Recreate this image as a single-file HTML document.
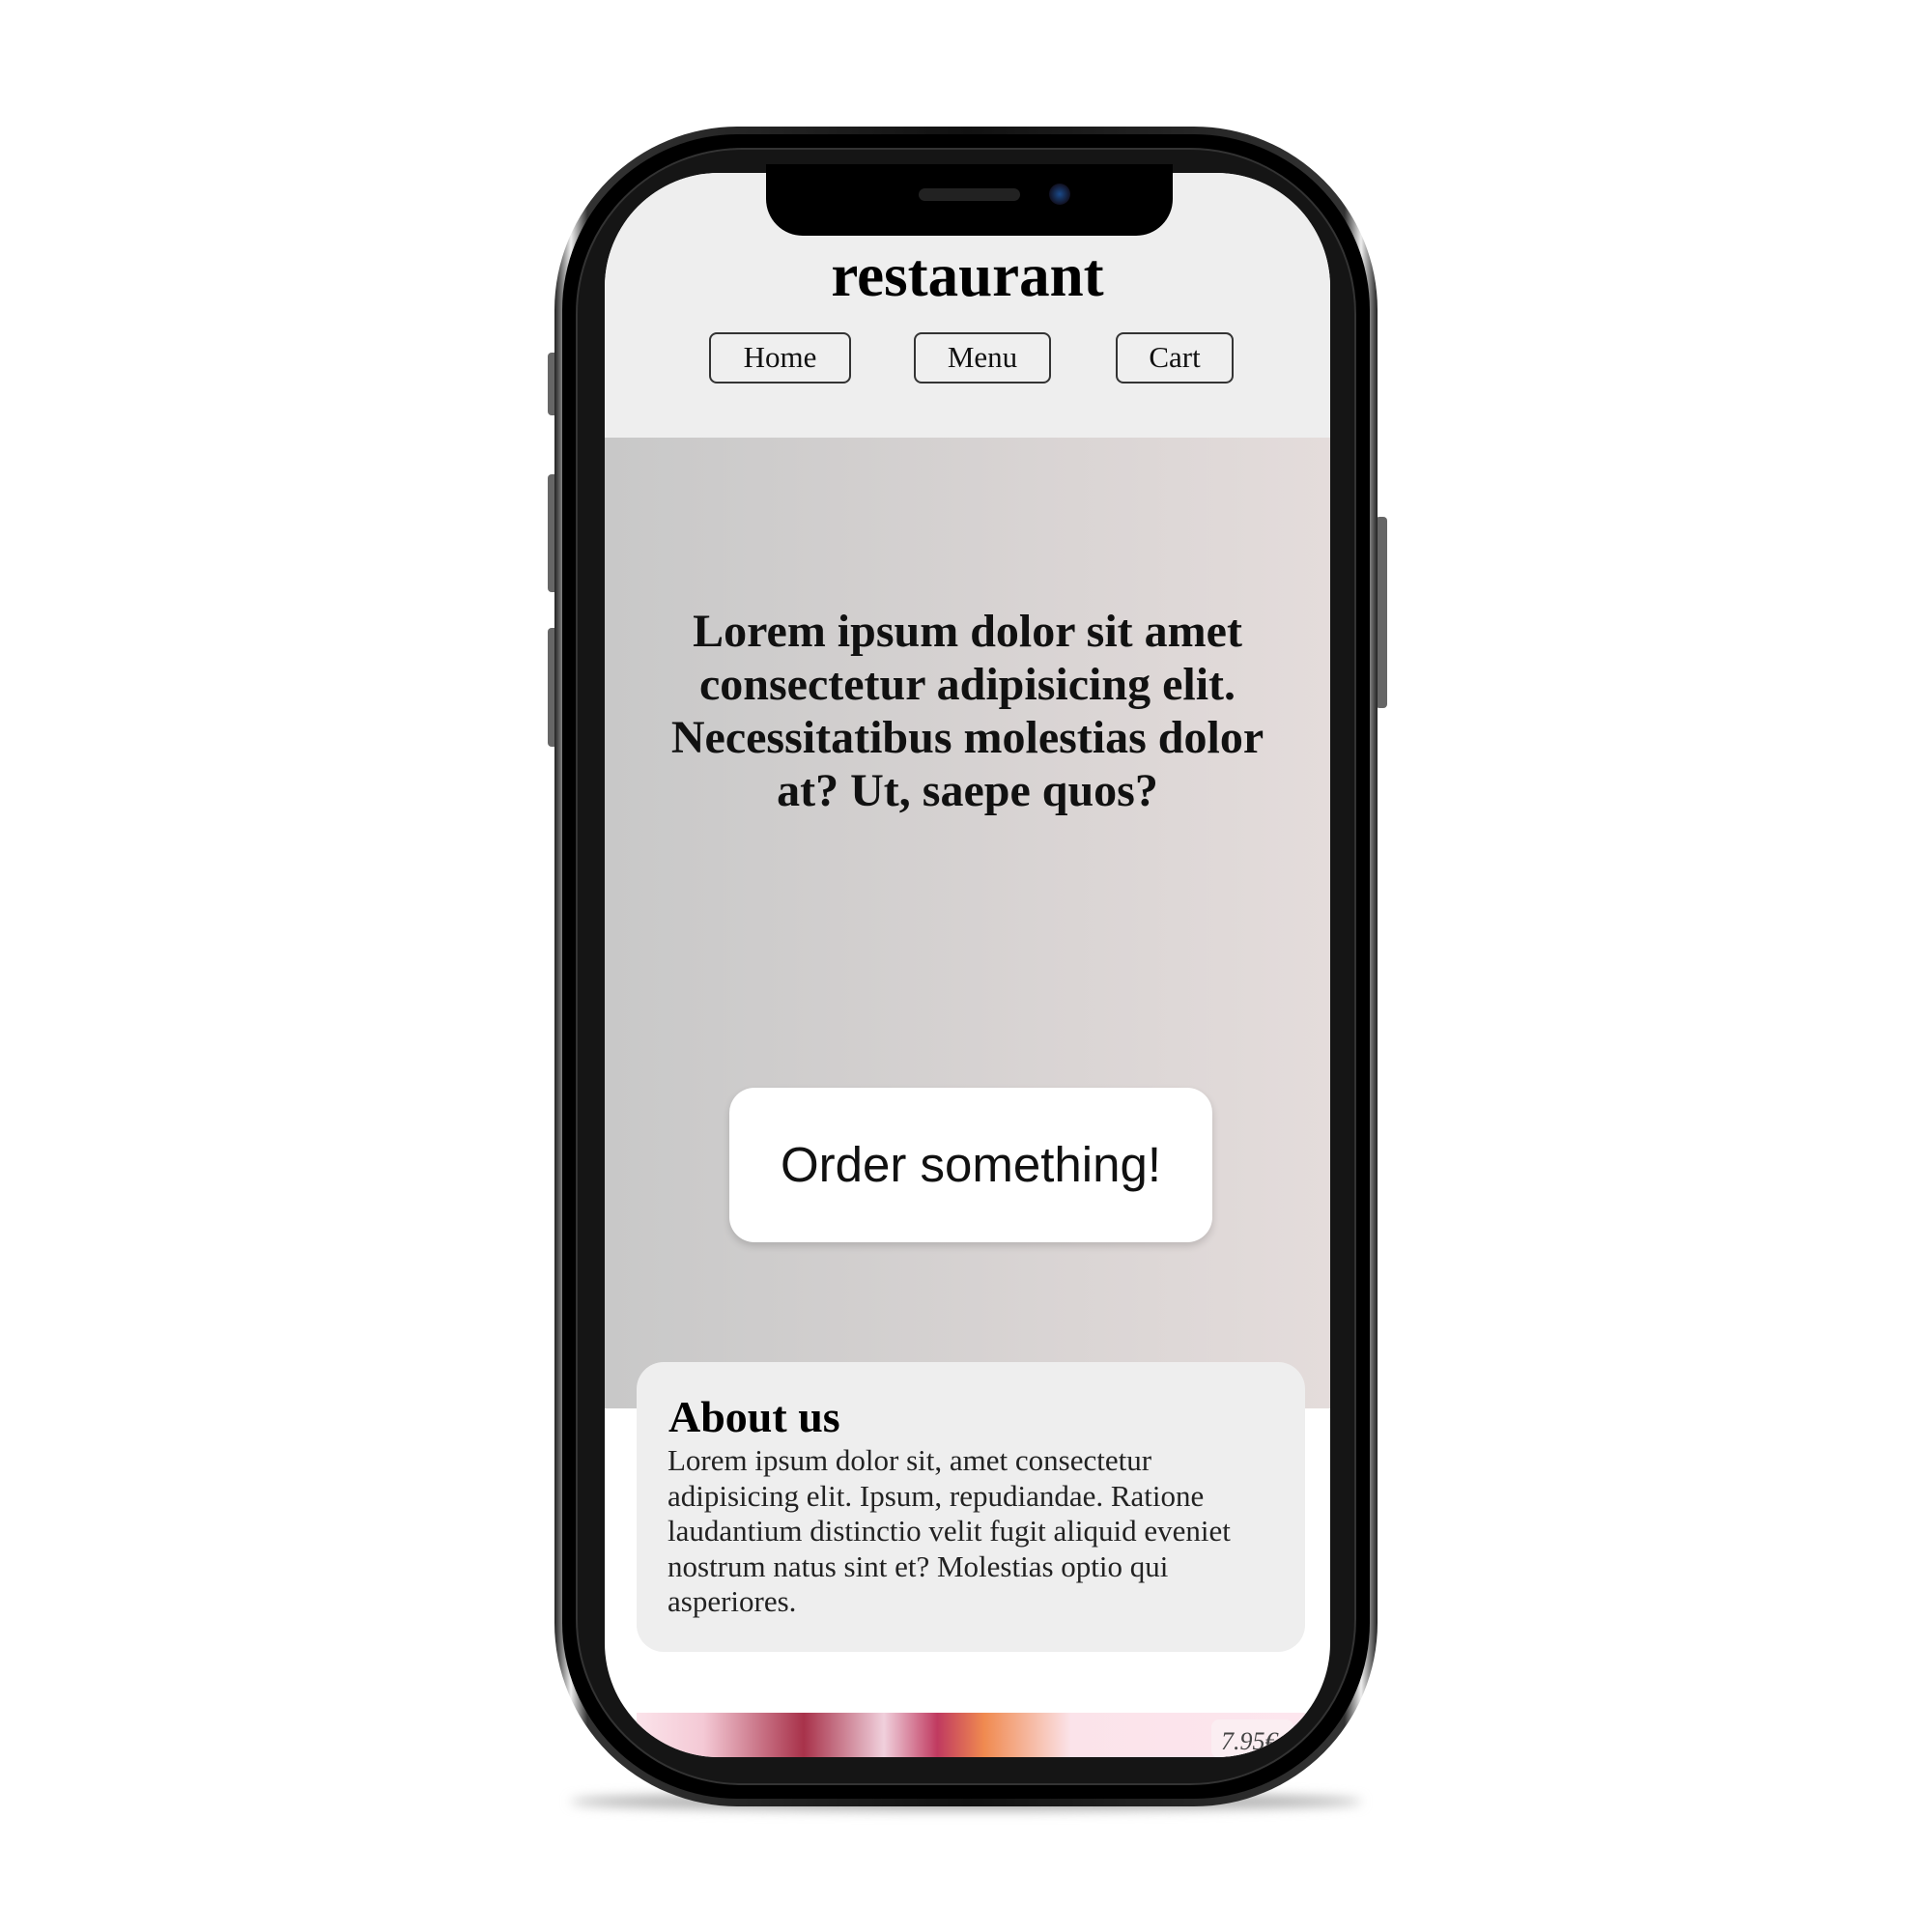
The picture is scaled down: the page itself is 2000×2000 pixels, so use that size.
<!DOCTYPE html>
<html><head><style>
body{margin:0;width:2000px;height:2000px;background:#fff;position:relative;overflow:hidden;font-family:"Liberation Serif",serif}
.abs{position:absolute}
.btn{position:absolute;border:2.5px solid #333;border-radius:8px;background:#efefef;font-size:31px;text-align:center;box-sizing:border-box;line-height:48px;color:#111}
</style></head><body>
<div class="abs" style="left:567px;top:365px;width:12px;height:65px;background:#666;border-radius:4px"></div>
<div class="abs" style="left:567px;top:491px;width:12px;height:122px;background:#666;border-radius:4px"></div>
<div class="abs" style="left:567px;top:650px;width:12px;height:123px;background:#666;border-radius:4px"></div>
<div class="abs" style="left:1424px;top:535px;width:12px;height:198px;background:#666;border-radius:4px"></div>
<div class="abs" style="left:590px;top:1856px;width:820px;height:18px;border-radius:50%;background:#aaa;filter:blur(6px)"></div>
<div class="abs" style="left:574px;top:131px;width:852px;height:1739px;border-radius:190px;background:linear-gradient(90deg,#222,#eee 2%,#333 4%,#111 50%,#333 96%,#eee 98%,#222);"></div>
<div class="abs" style="left:582px;top:139px;width:836px;height:1723px;border-radius:182px;background:#000"></div>
<div class="abs" style="left:596px;top:153px;width:808px;height:1695px;border-radius:172px;background:#151515;border:2px solid #333;box-sizing:border-box"></div>
<div class="abs" style="left:626px;top:179px;width:751px;height:1648px;border-radius:118px;overflow:hidden;background:#fff;height:1640px">
  <div class="abs" style="left:0;top:0;width:751px;height:274px;background:#eee"></div>
  <div class="abs" style="left:0;top:274px;width:751px;height:1012px;background:linear-gradient(90deg,#c8c8c8,#e4dcdb);height:1005px"></div>
  <div class="abs" style="left:0;top:70px;width:751px;text-align:center;font-weight:bold;font-size:63px">restaurant</div>
  <div class="btn" style="left:108px;top:165px;width:147px;height:53px">Home</div>
  <div class="btn" style="left:320px;top:165px;width:142px;height:53px">Menu</div>
  <div class="btn" style="left:529px;top:165px;width:122px;height:53px">Cart</div>
  <div class="abs" style="left:50px;top:447px;width:651px;text-align:center;font-weight:bold;font-size:48px;line-height:55px;color:#111">Lorem ipsum dolor sit amet consectetur adipisicing elit. Necessitatibus molestias dolor at? Ut, saepe quos?</div>
  <div class="abs" style="left:129px;top:947px;width:500px;height:160px;background:#fff;border-radius:26px;box-shadow:0 4px 8px rgba(0,0,0,.15);font-family:'Liberation Sans',sans-serif;font-size:51px;text-align:center;line-height:160px;color:#111">Order something!</div>
  <div class="abs" style="left:33px;top:1238px;width:692px;height:300px;background:#eee;border-radius:28px;margin-top:-7px">
    <div style="position:absolute;left:33px;top:30px;font-weight:bold;font-size:46px">About us</div>
    <div style="position:absolute;left:32px;top:84px;width:630px;font-size:31px;line-height:36.5px;color:#222">Lorem ipsum dolor sit, amet consectetur adipisicing elit. Ipsum, repudiandae. Ratione laudantium distinctio velit fugit aliquid eveniet nostrum natus sint et? Molestias optio qui asperiores.</div>
  </div>
  <div class="abs" style="left:33px;top:1603px;width:692px;height:60px;margin-top:-9px;background:linear-gradient(90deg,#fbe3ea,#f4c9d5 10%,#a8324a 25%,#f0d0dc 37%,#c03a60 45%,#f08a50 52%,#fbe3ea 65%,#fde6ee)"></div>
  <div class="abs" style="left:628px;top:1601px;width:85px;height:40px;background:#fbeef2;border-radius:8px;font-style:italic;font-size:26px;color:#444;padding:8px 0 0 10px;box-sizing:border-box">7.95€</div>
</div>
<div class="abs" style="left:793px;top:170px;width:421px;height:74px;background:#000;border-radius:0 0 38px 38px"></div>
<div class="abs" style="left:951px;top:195px;width:105px;height:13px;background:#222;border-radius:7px"></div>
<div class="abs" style="left:1086px;top:190px;width:22px;height:22px;background:radial-gradient(#1a4a8a,#112 70%);border-radius:50%"></div>
</body></html>
